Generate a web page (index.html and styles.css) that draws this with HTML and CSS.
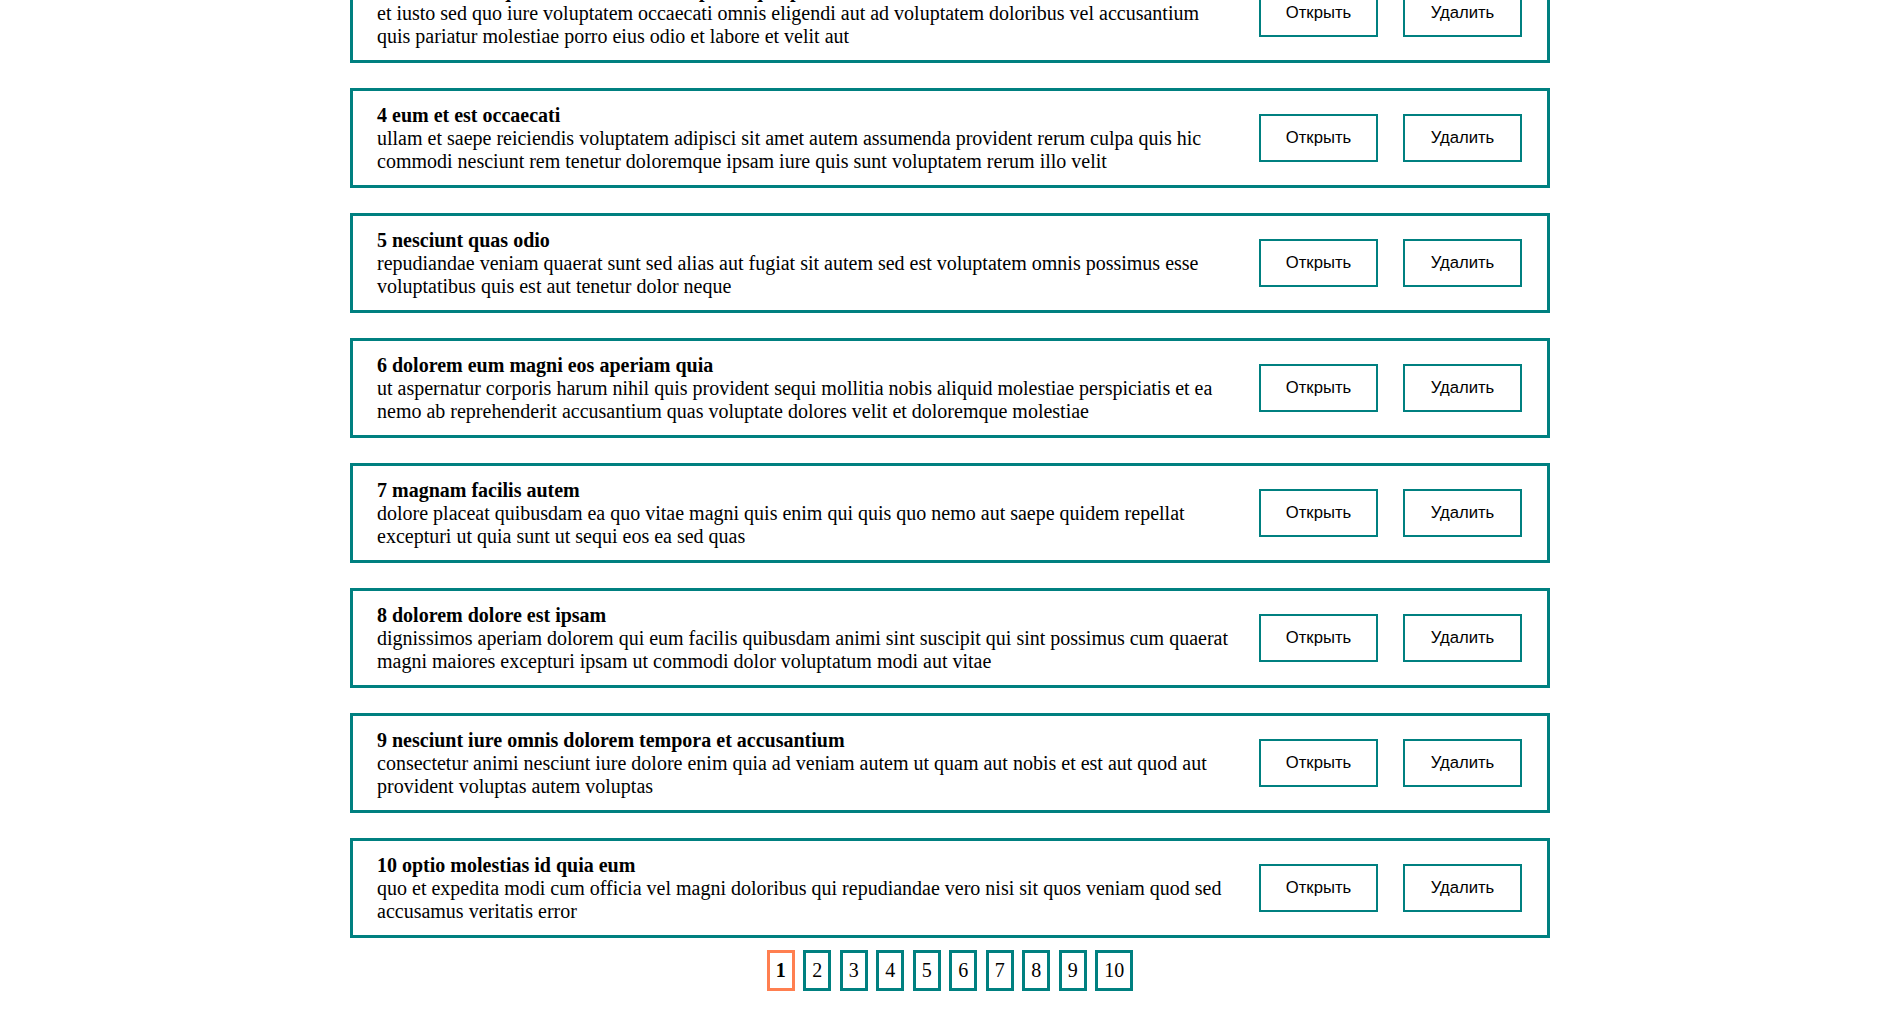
FILE: index.html
```html
<!DOCTYPE html>
<html lang="ru">
<head>
<meta charset="utf-8">
<title>Posts</title>
<link rel="stylesheet" href="styles.css">
</head>
<body>
<div class="app">
  <div class="posts">
    <div class="post">
      <div class="post-text">
        <strong class="post-title">3 ea molestias quasi exercitationem repellat qui ipsa sit aut</strong>
        <div class="post-body">et iusto sed quo iure voluptatem occaecati omnis eligendi aut ad voluptatem doloribus vel accusantium quis pariatur molestiae porro eius odio et labore et velit aut</div>
      </div>
      <div class="post-btns">
        <button class="btn">Открыть</button>
        <button class="btn">Удалить</button>
      </div>
    </div>
    <div class="post">
      <div class="post-text">
        <strong class="post-title">4 eum et est occaecati</strong>
        <div class="post-body">ullam et saepe reiciendis voluptatem adipisci sit amet autem assumenda provident rerum culpa quis hic commodi nesciunt rem tenetur doloremque ipsam iure quis sunt voluptatem rerum illo velit</div>
      </div>
      <div class="post-btns">
        <button class="btn">Открыть</button>
        <button class="btn">Удалить</button>
      </div>
    </div>
    <div class="post">
      <div class="post-text">
        <strong class="post-title">5 nesciunt quas odio</strong>
        <div class="post-body">repudiandae veniam quaerat sunt sed alias aut fugiat sit autem sed est voluptatem omnis possimus esse voluptatibus quis est aut tenetur dolor neque</div>
      </div>
      <div class="post-btns">
        <button class="btn">Открыть</button>
        <button class="btn">Удалить</button>
      </div>
    </div>
    <div class="post">
      <div class="post-text">
        <strong class="post-title">6 dolorem eum magni eos aperiam quia</strong>
        <div class="post-body">ut aspernatur corporis harum nihil quis provident sequi mollitia nobis aliquid molestiae perspiciatis et ea nemo ab reprehenderit accusantium quas voluptate dolores velit et doloremque molestiae</div>
      </div>
      <div class="post-btns">
        <button class="btn">Открыть</button>
        <button class="btn">Удалить</button>
      </div>
    </div>
    <div class="post">
      <div class="post-text">
        <strong class="post-title">7 magnam facilis autem</strong>
        <div class="post-body">dolore placeat quibusdam ea quo vitae magni quis enim qui quis quo nemo aut saepe quidem repellat excepturi ut quia sunt ut sequi eos ea sed quas</div>
      </div>
      <div class="post-btns">
        <button class="btn">Открыть</button>
        <button class="btn">Удалить</button>
      </div>
    </div>
    <div class="post">
      <div class="post-text">
        <strong class="post-title">8 dolorem dolore est ipsam</strong>
        <div class="post-body">dignissimos aperiam dolorem qui eum facilis quibusdam animi sint suscipit qui sint possimus cum quaerat magni maiores excepturi ipsam ut commodi dolor voluptatum modi aut vitae</div>
      </div>
      <div class="post-btns">
        <button class="btn">Открыть</button>
        <button class="btn">Удалить</button>
      </div>
    </div>
    <div class="post">
      <div class="post-text">
        <strong class="post-title">9 nesciunt iure omnis dolorem tempora et accusantium</strong>
        <div class="post-body">consectetur animi nesciunt iure dolore enim quia ad veniam autem ut quam aut nobis et est aut quod aut provident voluptas autem voluptas</div>
      </div>
      <div class="post-btns">
        <button class="btn">Открыть</button>
        <button class="btn">Удалить</button>
      </div>
    </div>
    <div class="post">
      <div class="post-text">
        <strong class="post-title">10 optio molestias id quia eum</strong>
        <div class="post-body">quo et expedita modi cum officia vel magni doloribus qui repudiandae vero nisi sit quos veniam quod sed accusamus veritatis error</div>
      </div>
      <div class="post-btns">
        <button class="btn">Открыть</button>
        <button class="btn">Удалить</button>
      </div>
    </div>
  </div>
  <div class="pages">
    <span class="page page-current">1</span>
    <span class="page">2</span>
    <span class="page">3</span>
    <span class="page">4</span>
    <span class="page">5</span>
    <span class="page">6</span>
    <span class="page">7</span>
    <span class="page">8</span>
    <span class="page">9</span>
    <span class="page">10</span>
  </div>
</div>
</body>
</html>
```
FILE: styles.css
```css
* {
  box-sizing: border-box;
}

html, body {
  margin: 0;
  padding: 0;
  background: #fff;
}

body {
  font-family: "Liberation Serif", "Times New Roman", serif;
  font-size: 20px;
  color: #000;
}

.app {
  width: 1200px;
  margin-left: calc(50% - 597px);
  margin-top: -37px;
}

.posts {
  display: flex;
  flex-direction: column;
  gap: 25px;
}

.post {
  display: flex;
  align-items: center;
  height: 100px;
  border: 3px solid #008080;
  padding: 0 25px 0 24px;
}

.post-text {
  flex: 1;
  min-width: 0;
  margin-right: 25px;
  line-height: 23px;
}

.post-title {
  display: block;
  font-weight: bold;
}

.post-btns {
  display: flex;
  gap: 25px;
}

.btn {
  width: 119px;
  height: 48px;
  background: #fff;
  border: 2px solid #008080;
  font-family: "Liberation Sans", Arial, sans-serif;
  font-size: 16.67px;
  color: #000;
  padding: 0;
  cursor: pointer;
}

.pages {
  display: flex;
  justify-content: center;
  gap: 8.5px;
  margin-top: 12px;
}

.page {
  height: 41px;
  padding: 0 6px;
  border: 3px solid #008080;
  line-height: 35px;
  font-size: 20px;
  cursor: pointer;
}

.page-current {
  border-color: #ff7f50;
  font-weight: bold;
}
```
